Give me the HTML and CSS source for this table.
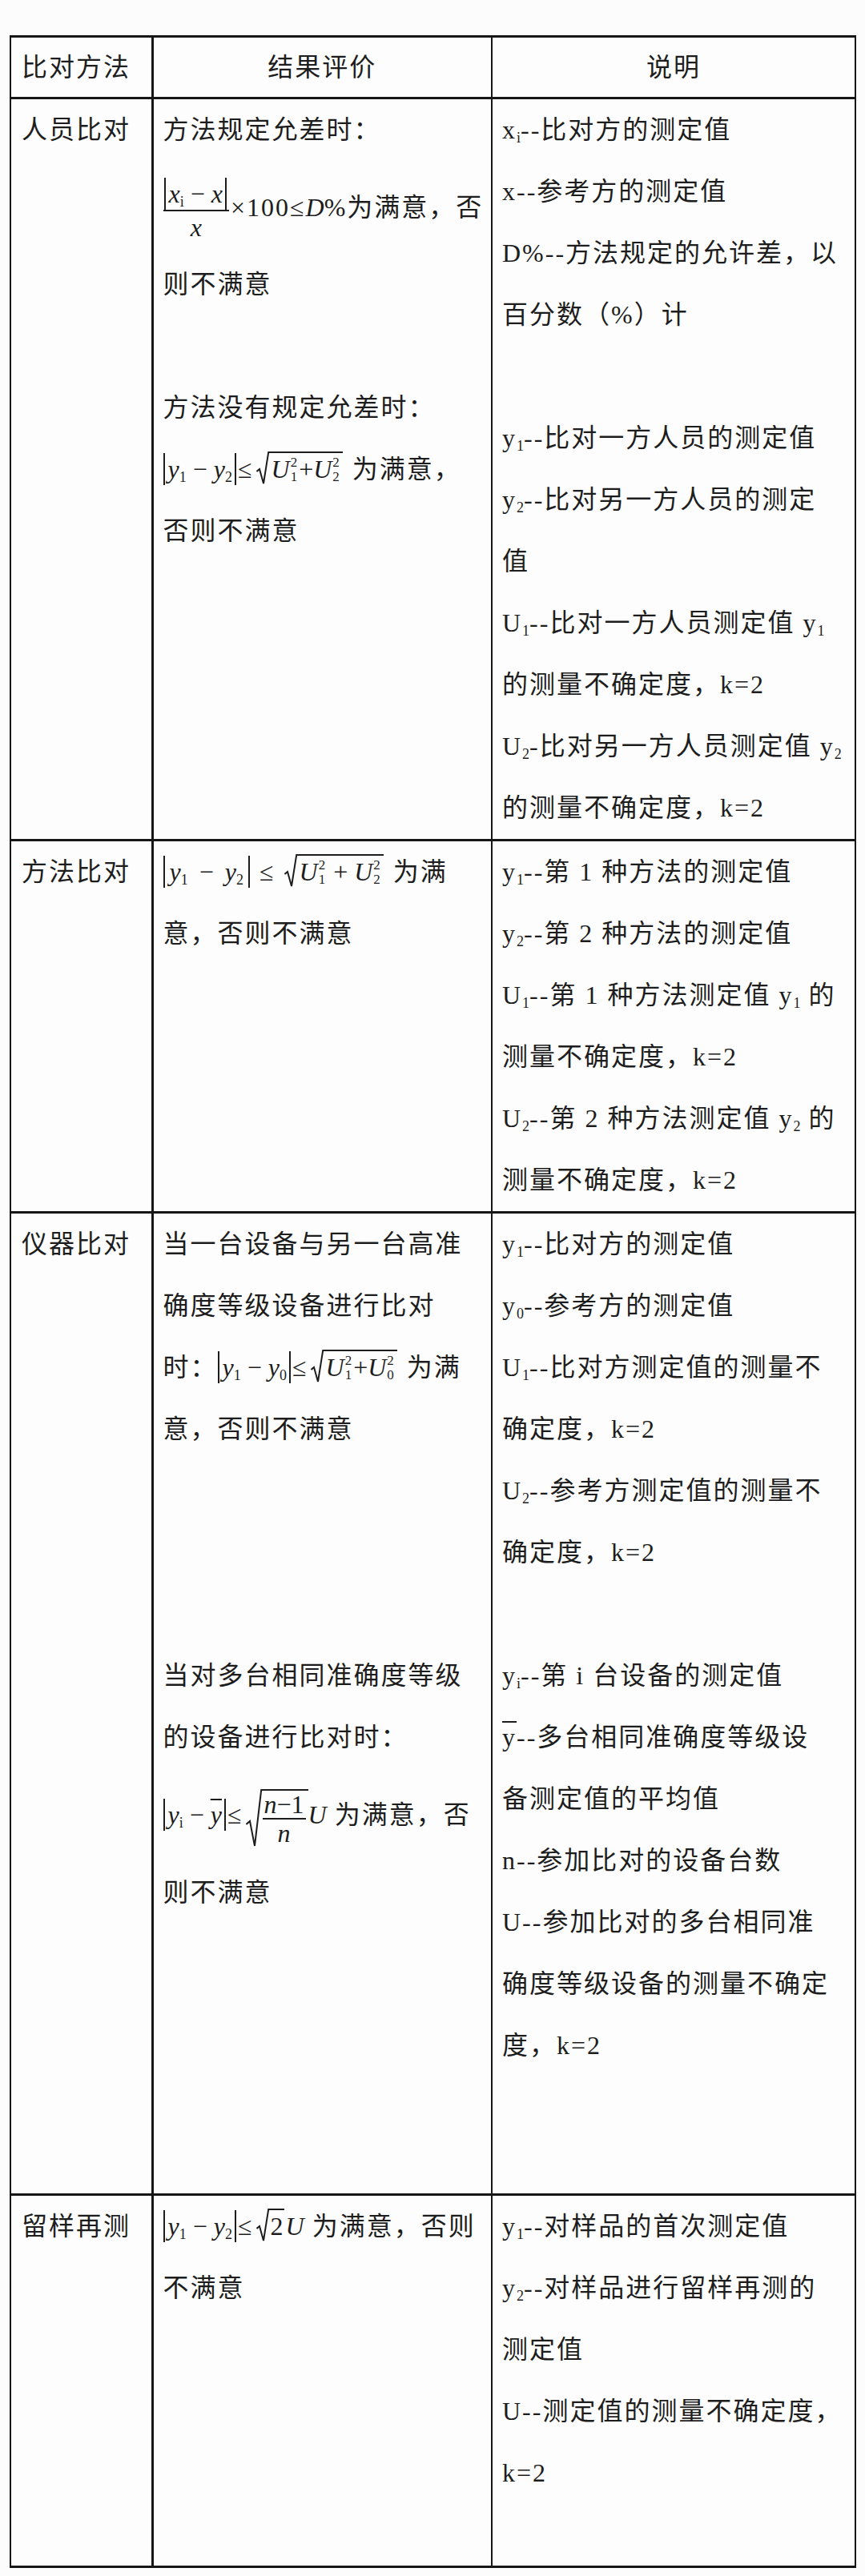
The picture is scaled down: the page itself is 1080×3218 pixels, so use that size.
FILE: index.html
```html
<!DOCTYPE html>
<html lang="zh-CN">
<head>
<meta charset="utf-8">
<title>比对方法与结果评价</title>
<link rel="stylesheet" href="styles.css">
</head>
<body>
<main class="page">
<table class="cmp">
  <colgroup><col class="c1"><col class="c2"><col class="c3"></colgroup>
  <thead>
    <tr><th class="h-left">比对方法</th><th>结果评价</th><th>说明</th></tr>
  </thead>
  <tbody>
    <tr>
      <td>人员比对</td>
      <td>
        <div class="ln">方法规定允差时：</div>
        <div class="ln fx1"><span class="frac"><span class="num"><span class="abs"><i>x</i><sub>i</sub> − <i>x</i></span></span><span class="den"><i>x</i></span></span>×100≤<i>D</i>%为满意，否</div>
        <div class="ln">则不满意</div>
        <div class="ln blank"></div>
        <div class="ln">方法没有规定允差时：</div>
        <div class="ln"><span class="abs"><i>y</i><sub>1</sub> − <i>y</i><sub>2</sub></span>≤<span class="rad"><svg class="rs" viewBox="0 0 16 42" preserveAspectRatio="none" aria-hidden="true"><polyline points="0.5,25 4,22 9,40 15.2,1 16,1" vector-effect="non-scaling-stroke"/></svg><span class="rc"><i>U</i><span class="ss"><span>2</span><span>1</span></span>+<i>U</i><span class="ss"><span>2</span><span>2</span></span></span></span> 为满意，</div>
        <div class="ln">否则不满意</div>
      </td>
      <td>
        <div class="ln">x<sub>i</sub>--比对方的测定值</div>
        <div class="ln">x--参考方的测定值</div>
        <div class="ln">D%--方法规定的允许差，以</div>
        <div class="ln">百分数（%）计</div>
        <div class="ln blank"></div>
        <div class="ln">y<sub>1</sub>--比对一方人员的测定值</div>
        <div class="ln">y<sub>2</sub>--比对另一方人员的测定</div>
        <div class="ln">值</div>
        <div class="ln">U<sub>1</sub>--比对一方人员测定值 y<sub>1</sub></div>
        <div class="ln">的测量不确定度，k=2</div>
        <div class="ln">U<sub>2</sub>-比对另一方人员测定值 y<sub>2</sub></div>
        <div class="ln">的测量不确定度，k=2</div>
      </td>
    </tr>
    <tr>
      <td>方法比对</td>
      <td>
        <div class="ln"><span class="abs wide"><i>y</i><sub>1</sub> <span class="op">−</span> <i>y</i><sub>2</sub></span> <span class="op">≤</span> <span class="rad"><svg class="rs" viewBox="0 0 16 42" preserveAspectRatio="none" aria-hidden="true"><polyline points="0.5,25 4,22 9,40 15.2,1 16,1" vector-effect="non-scaling-stroke"/></svg><span class="rc"><i>U</i><span class="ss"><span>2</span><span>1</span></span> <span class="op">+</span> <i>U</i><span class="ss"><span>2</span><span>2</span></span></span></span> 为满</div>
        <div class="ln">意，否则不满意</div>
      </td>
      <td>
        <div class="ln">y<sub>1</sub>--第 1 种方法的测定值</div>
        <div class="ln">y<sub>2</sub>--第 2 种方法的测定值</div>
        <div class="ln">U<sub>1</sub>--第 1 种方法测定值 y<sub>1</sub> 的</div>
        <div class="ln">测量不确定度，k=2</div>
        <div class="ln">U<sub>2</sub>--第 2 种方法测定值 y<sub>2</sub> 的</div>
        <div class="ln">测量不确定度，k=2</div>
      </td>
    </tr>
    <tr>
      <td>仪器比对</td>
      <td>
        <div class="ln">当一台设备与另一台高准</div>
        <div class="ln">确度等级设备进行比对</div>
        <div class="ln">时：<span class="abs"><i>y</i><sub>1</sub> − <i>y</i><sub>0</sub></span>≤<span class="rad"><svg class="rs" viewBox="0 0 16 42" preserveAspectRatio="none" aria-hidden="true"><polyline points="0.5,25 4,22 9,40 15.2,1 16,1" vector-effect="non-scaling-stroke"/></svg><span class="rc"><i>U</i><span class="ss"><span>2</span><span>1</span></span>+<i>U</i><span class="ss"><span>2</span><span>0</span></span></span></span> 为满</div>
        <div class="ln">意，否则不满意</div>
        <div class="ln blank"></div>
        <div class="ln blank"></div>
        <div class="ln blank"></div>
        <div class="ln">当对多台相同准确度等级</div>
        <div class="ln">的设备进行比对时：</div>
        <div class="ln fx2"><span class="abs"><i>y</i><sub>i</sub> − <span class="bar"><i>y</i></span></span>≤<span class="rad tall"><svg class="rs" viewBox="0 0 20 72" preserveAspectRatio="none" aria-hidden="true"><polyline points="0.5,44 5,40 11,71 19.2,1 20,1" vector-effect="non-scaling-stroke"/></svg><span class="rc"><span class="frac in"><span class="num"><i>n</i>−1</span><span class="den"><i>n</i></span></span></span></span><i>U</i> 为满意，否</div>
        <div class="ln">则不满意</div>
      </td>
      <td class="tail">
        <div class="ln">y<sub>1</sub>--比对方的测定值</div>
        <div class="ln">y<sub>0</sub>--参考方的测定值</div>
        <div class="ln">U<sub>1</sub>--比对方测定值的测量不</div>
        <div class="ln">确定度，k=2</div>
        <div class="ln">U<sub>2</sub>--参考方测定值的测量不</div>
        <div class="ln">确定度，k=2</div>
        <div class="ln blank"></div>
        <div class="ln">y<sub>i</sub>--第 i 台设备的测定值</div>
        <div class="ln"><span class="bar">y</span>--多台相同准确度等级设</div>
        <div class="ln">备测定值的平均值</div>
        <div class="ln">n--参加比对的设备台数</div>
        <div class="ln">U--参加比对的多台相同准</div>
        <div class="ln">确度等级设备的测量不确定</div>
        <div class="ln">度，k=2</div>
      </td>
    </tr>
    <tr>
      <td>留样再测</td>
      <td>
        <div class="ln"><span class="abs"><i>y</i><sub>1</sub> − <i>y</i><sub>2</sub></span>≤<span class="rad"><svg class="rs" viewBox="0 0 16 42" preserveAspectRatio="none" aria-hidden="true"><polyline points="0.5,25 4,22 9,40 15.2,1 16,1" vector-effect="non-scaling-stroke"/></svg><span class="rc short">2</span></span><i>U</i> 为满意，否则</div>
        <div class="ln">不满意</div>
      </td>
      <td>
        <div class="ln">y<sub>1</sub>--对样品的首次测定值</div>
        <div class="ln">y<sub>2</sub>--对样品进行留样再测的</div>
        <div class="ln">测定值</div>
        <div class="ln">U--测定值的测量不确定度，</div>
        <div class="ln">k=2</div>
        <div class="ln blank"></div>
      </td>
    </tr>
  </tbody>
</table>
</main>
</body>
</html>
```
FILE: styles.css
```css
* { box-sizing: border-box; }

html, body { margin: 0; }

body {
  background: #f8f8f8;
  color: #1d1d1d;
  font-family: "Liberation Serif", "Noto Sans CJK SC", serif;
  font-size: 32px;
}

.page {
  padding: 44px 13px 0 12px;
  min-height: 3218px;
  background: #fcfcfc;
}

.cmp {
  border-collapse: collapse;
  table-layout: fixed;
  width: 1055px;
  background: #fdfdfd;
  border-top: 3px solid #161616;
  border-bottom: 3px solid #161616;
  border-left: 2px solid #161616;
  border-right: 2px solid #161616;
}

.c1 { width: 177px; }
.c2 { width: 424px; }
.c3 { width: 454px; }

th, td {
  vertical-align: top;
  padding: 0 12px;
  line-height: 77px;
  white-space: nowrap;
  border-bottom: 3px solid #161616;
  letter-spacing: 2px;
  font-weight: normal;
  text-align: left;
}

th:nth-child(1), td:nth-child(1) {
  border-right: 3px solid #161616;
  padding-left: 13px;
}

th:nth-child(2), td:nth-child(2) {
  border-right: 2px solid #161616;
}

th {
  line-height: 74px;
  text-align: center;
}

th.h-left { text-align: left; }

.ln { height: 77px; }
.ln.fx1 { height: 116px; line-height: 116px; }
.ln.fx2 { height: 117px; line-height: 117px; }

.tail { padding-bottom: 146px; }

sub {
  font-size: 18px;
  line-height: 0;
  vertical-align: -5px;
  letter-spacing: 0;
}

i { font-style: italic; letter-spacing: 0; }

.op { letter-spacing: 0; }

/* absolute value */
.abs {
  display: inline-block;
  line-height: 40px;
  border-left: 2px solid #1d1d1d;
  border-right: 2px solid #1d1d1d;
  padding: 0 3px 0 4px;
  margin-right: 2px;
  letter-spacing: 0;
}

.abs.wide { padding: 0 6px; word-spacing: 6px; }

.bar { text-decoration: overline; text-decoration-thickness: 2px; }

/* fractions */
.frac {
  display: inline-flex;
  flex-direction: column;
  align-items: center;
  vertical-align: middle;
  letter-spacing: 0;
  margin-right: 2px;
}

.frac .num {
  border-bottom: 2px solid #1d1d1d;
  line-height: 38px;
  padding: 0 1px;
}

.frac .den { line-height: 40px; }

.frac.in .num { line-height: 34px; padding: 0 2px; }
.frac.in .den { line-height: 34px; }

/* radicals */
.rad {
  display: inline-flex;
  vertical-align: -9px;
  letter-spacing: 0;
  margin: 0 2px 0 3px;
}

.rs {
  flex: none;
  width: 16px;
  height: 42px;
  fill: none;
  stroke: #1d1d1d;
  stroke-width: 2;
}

.rc {
  border-top: 2px solid #1d1d1d;
  line-height: 40px;
  padding: 0 2px 0 3px;
}

.rc.short { padding: 0 1px 0 2px; }

.rad.tall { vertical-align: middle; margin-right: 0; }
.rad.tall .rs { width: 20px; height: 72px; }
.rad.tall .rc { display: flex; padding: 0 1px; }

.ss {
  display: inline-flex;
  flex-direction: column;
  font-size: 17px;
  line-height: 18px;
  vertical-align: 14px;
  margin: 0 2px 0 1px;
}
```
